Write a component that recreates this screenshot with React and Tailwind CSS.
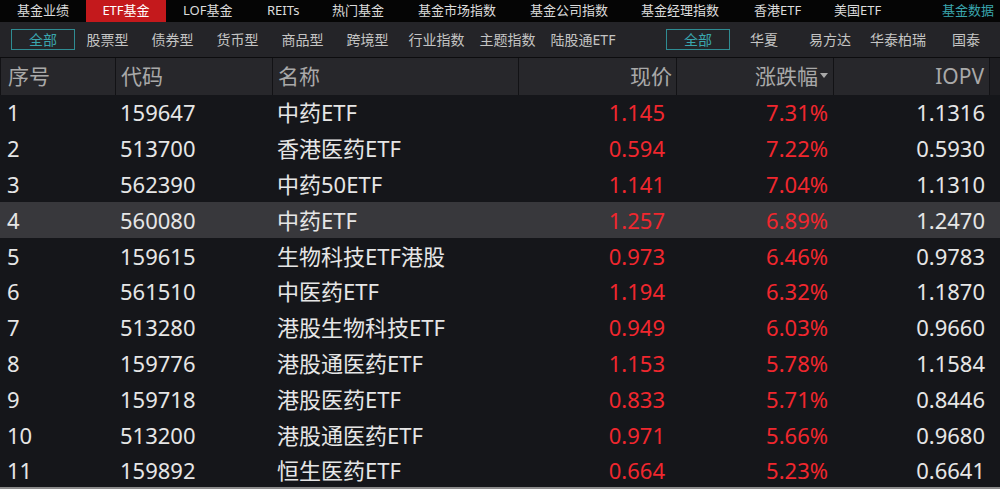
import React from 'react';

const FONT = { fontFamily: '"Noto Sans", "Noto Sans CJK SC", sans-serif' };

// 顶部导航 (宽度按截图量出)
const topTabs = [
  ['基金业绩', 'w-[86px]'],
  ['ETF基金', 'w-[80px]'],
  ['LOF基金', 'w-[84px]'],
  ['REITs', 'w-[65px]'],
  ['热门基金', 'w-[86px]'],
  ['基金市场指数', 'w-[112px]'],
  ['基金公司指数', 'w-[111px]'],
  ['基金经理指数', 'w-[113px]'],
  ['香港ETF', 'w-[80px]'],
  ['美国ETF', 'w-[108px]'],
];

const typeFilters = [
  ['股票型', 'w-[65px]'],
  ['债券型', 'w-[65px]'],
  ['货币型', 'w-[65px]'],
  ['商品型', 'w-[65px]'],
  ['跨境型', 'w-[65px]'],
  ['行业指数', 'w-[73px]'],
  ['主题指数', 'w-[69px]'],
  ['陆股通ETF', 'w-[82px]'],
];

const companyFilters = [
  ['华夏', 'w-[68px]'],
  ['易方达', 'w-[64px]'],
  ['华泰柏瑞', 'w-[72px]'],
  ['国泰', 'w-[64px]'],
];

const rows = [
  ['1', '159647', '中药ETF', '1.145', '7.31%', '1.1316'],
  ['2', '513700', '香港医药ETF', '0.594', '7.22%', '0.5930'],
  ['3', '562390', '中药50ETF', '1.141', '7.04%', '1.1310'],
  ['4', '560080', '中药ETF', '1.257', '6.89%', '1.2470'],
  ['5', '159615', '生物科技ETF港股', '0.973', '6.46%', '0.9783'],
  ['6', '561510', '中医药ETF', '1.194', '6.32%', '1.1870'],
  ['7', '513280', '港股生物科技ETF', '0.949', '6.03%', '0.9660'],
  ['8', '159776', '港股通医药ETF', '1.153', '5.78%', '1.1584'],
  ['9', '159718', '港股医药ETF', '0.833', '5.71%', '0.8446'],
  ['10', '513200', '港股通医药ETF', '0.971', '5.66%', '0.9680'],
  ['11', '159892', '恒生医药ETF', '0.664', '5.23%', '0.6641'],
];

function AllButton() {
  return (
    <div className="w-[64px] h-[21px] border border-[#2f8c93] flex items-center justify-center text-[14px] text-[#3aa6ae]">
      全部
    </div>
  );
}

export default function App() {
  return (
    <div className="w-[1000px] h-[489px] overflow-hidden bg-[#15161a] flex flex-col" style={FONT}>
      {/* 顶部导航 */}
      <div className="h-[22px] bg-[#050505] flex items-stretch text-[13px] text-[#dcdcdc] shrink-0">
        {topTabs.map(([t, w]) => (
          <div
            key={t}
            className={`${w} flex items-center whitespace-nowrap ${
              t === 'ETF基金' ? 'bg-[#c4191c] text-white justify-center' : 'pl-[17px]'
            }`}
          >
            {t}
          </div>
        ))}
        <div className="pl-[17px] flex items-center whitespace-nowrap text-[#3aa6ae]">基金数据</div>
      </div>

      {/* 筛选条 */}
      <div className="h-[35px] bg-[#242428] flex items-center text-[14px] text-[#c4c4c4] shrink-0">
        <div className="ml-[11px]">
          <AllButton />
        </div>
        {typeFilters.map(([t, w]) => (
          <div key={t} className={`${w} text-center whitespace-nowrap`}>
            {t}
          </div>
        ))}
        <div className="ml-[42px]">
          <AllButton />
        </div>
        {companyFilters.map(([t, w]) => (
          <div key={t} className={`${w} text-center whitespace-nowrap`}>
            {t}
          </div>
        ))}
      </div>
      <div className="h-px bg-[#0c0c0e] shrink-0" />

      {/* 表头 */}
      <div className="h-[37px] bg-[#27272b] flex text-[21px] text-[#a9a9a9] shrink-0">
        <div className="w-[115px] pl-[7px] flex items-center border-l border-[#121215]">序号</div>
        <div className="w-[157px] pl-[5px] flex items-center border-l border-[#121215]">代码</div>
        <div className="w-[246px] pl-[5px] flex items-center border-l border-[#121215]">名称</div>
        <div className="w-[158px] pr-[4px] flex items-center justify-end border-l border-[#121215]">现价</div>
        <div className="w-[157px] pr-[5px] flex items-center justify-end border-l border-[#121215]">
          涨跌幅
          <svg width="8" height="5" viewBox="0 0 8 5" className="ml-[2px] mb-[3px]">
            <path d="M0 0h8L4 5z" fill="#a9a9a9" />
          </svg>
        </div>
        <div className="w-[157px] pr-[5px] flex items-center justify-end border-l border-r border-[#121215]">IOPV</div>
        <div className="flex-1 bg-[#1d1d21]" />
      </div>

      {/* 数据行 */}
      <div className="flex-1 overflow-hidden">
        {rows.map((r) => (
          <div
            key={r[0]}
            className={`h-[35.8px] flex items-center text-[22px] ${r[0] === '4' ? 'bg-[#38383c]' : ''}`}
          >
            <div className="w-[115px] pl-[7px] text-[#e6e6e6]">{r[0]}</div>
            <div className="w-[157px] pl-[5px] text-[#e6e6e6]">{r[1]}</div>
            <div className="w-[246px] pl-[5px] text-[#e6e6e6] whitespace-nowrap">{r[2]}</div>
            <div className="w-[158px] pr-[11px] text-right text-[#f0272e]">{r[3]}</div>
            <div className="w-[157px] pr-[5px] text-right text-[#f0272e]">{r[4]}</div>
            <div className="w-[157px] pr-[5px] text-right text-[#e6e6e6]">{r[5]}</div>
          </div>
        ))}
      </div>
      <div className="h-[2px] bg-[#8c8c8c] shrink-0" />
    </div>
  );
}
